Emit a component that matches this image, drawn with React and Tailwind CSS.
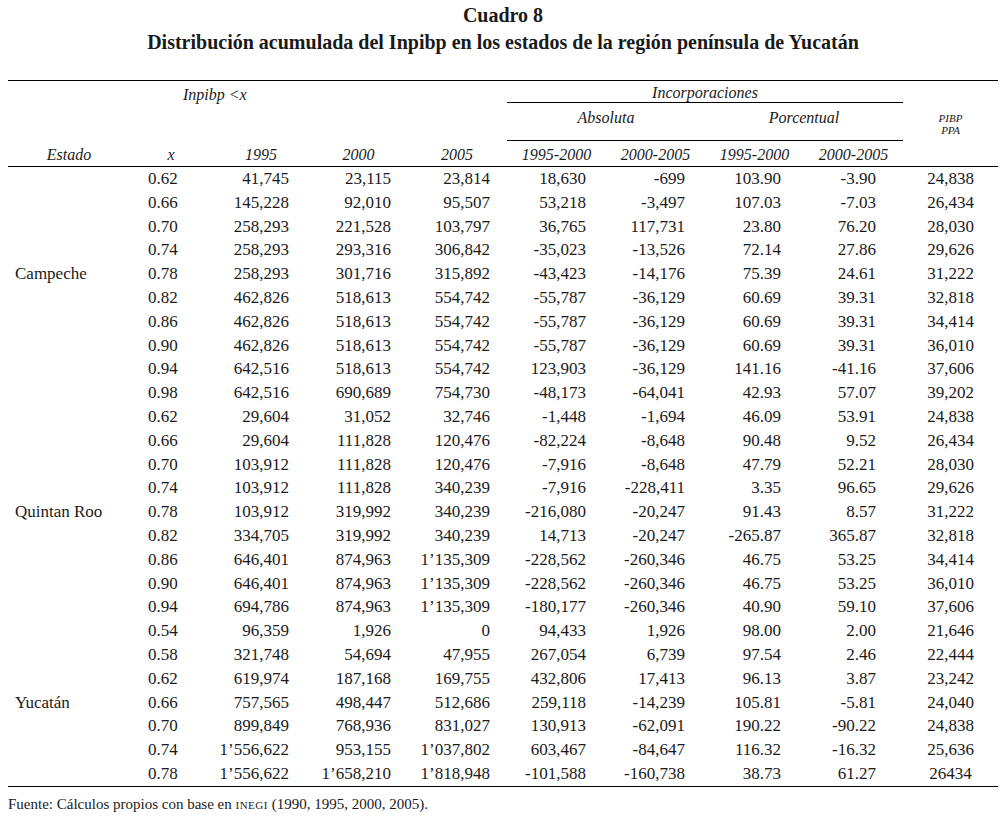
import React from "react";

const data = [
  {
    estado: "Campeche",
    labelRow: 4,
    rows: [
      ["0.62", "41,745", "23,115", "23,814", "18,630", "-699", "103.90", "-3.90", "24,838"],
      ["0.66", "145,228", "92,010", "95,507", "53,218", "-3,497", "107.03", "-7.03", "26,434"],
      ["0.70", "258,293", "221,528", "103,797", "36,765", "117,731", "23.80", "76.20", "28,030"],
      ["0.74", "258,293", "293,316", "306,842", "-35,023", "-13,526", "72.14", "27.86", "29,626"],
      ["0.78", "258,293", "301,716", "315,892", "-43,423", "-14,176", "75.39", "24.61", "31,222"],
      ["0.82", "462,826", "518,613", "554,742", "-55,787", "-36,129", "60.69", "39.31", "32,818"],
      ["0.86", "462,826", "518,613", "554,742", "-55,787", "-36,129", "60.69", "39.31", "34,414"],
      ["0.90", "462,826", "518,613", "554,742", "-55,787", "-36,129", "60.69", "39.31", "36,010"],
      ["0.94", "642,516", "518,613", "554,742", "123,903", "-36,129", "141.16", "-41.16", "37,606"],
      ["0.98", "642,516", "690,689", "754,730", "-48,173", "-64,041", "42.93", "57.07", "39,202"],
    ],
  },
  {
    estado: "Quintan Roo",
    labelRow: 4,
    rows: [
      ["0.62", "29,604", "31,052", "32,746", "-1,448", "-1,694", "46.09", "53.91", "24,838"],
      ["0.66", "29,604", "111,828", "120,476", "-82,224", "-8,648", "90.48", "9.52", "26,434"],
      ["0.70", "103,912", "111,828", "120,476", "-7,916", "-8,648", "47.79", "52.21", "28,030"],
      ["0.74", "103,912", "111,828", "340,239", "-7,916", "-228,411", "3.35", "96.65", "29,626"],
      ["0.78", "103,912", "319,992", "340,239", "-216,080", "-20,247", "91.43", "8.57", "31,222"],
      ["0.82", "334,705", "319,992", "340,239", "14,713", "-20,247", "-265.87", "365.87", "32,818"],
      ["0.86", "646,401", "874,963", "1’135,309", "-228,562", "-260,346", "46.75", "53.25", "34,414"],
      ["0.90", "646,401", "874,963", "1’135,309", "-228,562", "-260,346", "46.75", "53.25", "36,010"],
      ["0.94", "694,786", "874,963", "1’135,309", "-180,177", "-260,346", "40.90", "59.10", "37,606"],
    ],
  },
  {
    estado: "Yucatán",
    labelRow: 3,
    rows: [
      ["0.54", "96,359", "1,926", "0", "94,433", "1,926", "98.00", "2.00", "21,646"],
      ["0.58", "321,748", "54,694", "47,955", "267,054", "6,739", "97.54", "2.46", "22,444"],
      ["0.62", "619,974", "187,168", "169,755", "432,806", "17,413", "96.13", "3.87", "23,242"],
      ["0.66", "757,565", "498,447", "512,686", "259,118", "-14,239", "105.81", "-5.81", "24,040"],
      ["0.70", "899,849", "768,936", "831,027", "130,913", "-62,091", "190.22", "-90.22", "24,838"],
      ["0.74", "1’556,622", "953,155", "1’037,802", "603,467", "-84,647", "116.32", "-16.32", "25,636"],
      ["0.78", "1’556,622", "1’658,210", "1’818,948", "-101,588", "-160,738", "38.73", "61.27", "26434"],
    ],
  },
];

const cellCls = [
  "text-left pl-[18px]",
  "text-right pr-[21px]",
  "text-right pr-[16px]",
  "text-right pr-[17px]",
  "text-right pr-[20px]",
  "text-right pr-[20px]",
  "text-right pr-[23px]",
  "text-right pr-[27px]",
  "text-center",
];

const GRID =
  "grid grid-cols-[122px_82px_98px_97px_100px_99px_99px_99px_99px_95px]";

export default function App() {
  return (
    <div
      className="w-[1006px] h-[821px] bg-white text-[#1a1a1a]"
      style={{ fontFamily: '"Liberation Serif", "DejaVu Serif", serif' }}
    >
      <div className="pt-[2px] text-center font-bold text-[20px] leading-[27px]">
        <div>Cuadro 8</div>
        <div>Distribución acumulada del Inpibp en los estados de la región península de Yucatán</div>
      </div>

      <div className="mx-[8px] mt-[24px]">
        {/* header */}
        <div className={`${GRID} grid-rows-[22px_38px_25px] border-t border-b border-black italic text-[16px]`}>
          <div className="col-span-5 flex items-center pl-[175px] pt-[5px] leading-none">{"Inpibp <x"}</div>
          <div className="col-span-4 flex items-center justify-center border-b border-black pt-[2px] leading-none">
            Incorporaciones
          </div>
          <div className="row-span-3 flex flex-col items-center justify-center text-[11px] leading-[12px] pt-[1px]">
            <span>PIBP</span>
            <span>PPA</span>
          </div>

          <div className="col-span-5"></div>
          <div className="col-span-2 flex justify-center pt-[5px] border-b border-black leading-[20px]">Absoluta</div>
          <div className="col-span-2 flex justify-center pt-[5px] border-b border-black leading-[20px]">Porcentual</div>

          <div className="flex items-center justify-center pt-[2px]">Estado</div>
          <div className="flex items-center justify-center pt-[2px]">x</div>
          <div className="flex items-center justify-center pt-[2px]">1995</div>
          <div className="flex items-center justify-center pt-[2px]">2000</div>
          <div className="flex items-center justify-center pt-[2px]">2005</div>
          <div className="flex items-center justify-center pt-[2px]">1995-2000</div>
          <div className="flex items-center justify-center pt-[2px]">2000-2005</div>
          <div className="flex items-center justify-center pt-[2px]">1995-2000</div>
          <div className="flex items-center justify-center pt-[2px]">2000-2005</div>
        </div>

        {/* body */}
        <div className="border-b border-black text-[17px]">
          {data.map((g) =>
            g.rows.map((r, i) => (
              <div key={g.estado + i} className={`${GRID} h-[23.8px] leading-[23.8px]`}>
                <div className="pl-[7px] whitespace-nowrap">{i === g.labelRow ? g.estado : ""}</div>
                {r.map((v, j) => (
                  <div key={j} className={`${cellCls[j]} whitespace-nowrap`}>
                    {v}
                  </div>
                ))}
              </div>
            ))
          )}
        </div>

        <div className="mt-[8px] text-[15px] leading-[18px]">
          Fuente: Cálculos propios con base en <span className="text-[11px] tracking-[0.5px]">INEGI</span> (1990, 1995, 2000, 2005).
        </div>
      </div>
    </div>
  );
}
